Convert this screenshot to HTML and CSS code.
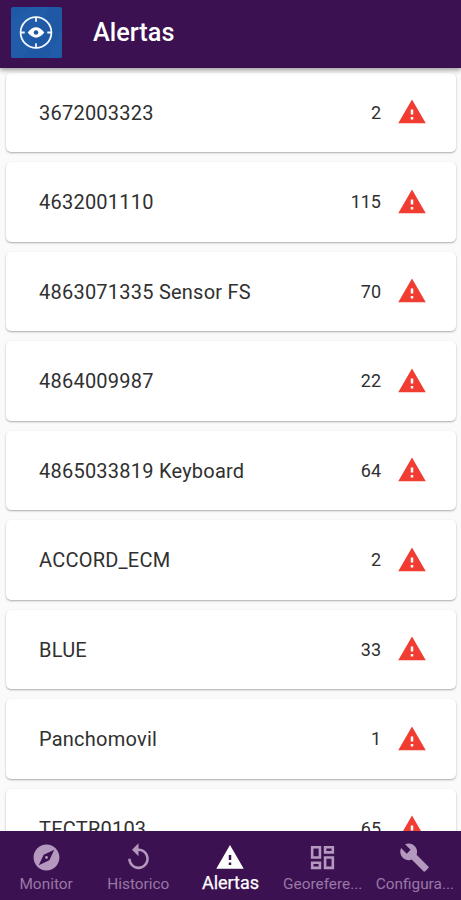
FILE: index.html
```html
<!DOCTYPE html>
<html lang="es">
<head>
<meta charset="utf-8">
<title>Alertas</title>
<link rel="stylesheet" href="styles.css">
</head>
<body>
<svg class="defs" width="0" height="0">
  <symbol id="warning" viewBox="0 0 24 24"><path d="M1 21h22L12 2 1 21zm12-3h-2v-2h2v2zm0-4h-2v-4h2v4z"/></symbol>
</svg>
<div class="app">
  <header class="bar">
    <svg class="logo" viewBox="0 0 52 52">
      <rect width="52" height="52" rx="2" fill="#1f58a5"/>
      <path d="M0 12 20 0h20L12 52H0zM52 20 38 52h14z" fill="#2867b1" opacity=".3"/>
      <g fill="none" stroke="#f4f8ff" stroke-width="1.8">
        <circle cx="25.5" cy="26" r="15.7"/>
        <path d="M25.5 10v5M25.5 37v5M9.500 26h4.500M37 26h4.500"/>
      </g>
      <path d="M17 26q8.500-10.500 17 0q-8.500 10.500-17 0z" fill="#fff"/>
      <circle cx="25.500" cy="26" r="2.300" fill="#1f58a5"/>
    </svg>
    <h1 class="title">Alertas</h1>
  </header>
  <main class="list">
    <div class="card"><span class="name">3672003323</span><span class="count">2</span><svg class="alert"><use href="#warning"/></svg></div>
    <div class="card"><span class="name">4632001110</span><span class="count">115</span><svg class="alert"><use href="#warning"/></svg></div>
    <div class="card"><span class="name">4863071335 Sensor FS</span><span class="count">70</span><svg class="alert"><use href="#warning"/></svg></div>
    <div class="card"><span class="name">4864009987</span><span class="count">22</span><svg class="alert"><use href="#warning"/></svg></div>
    <div class="card"><span class="name">4865033819 Keyboard</span><span class="count">64</span><svg class="alert"><use href="#warning"/></svg></div>
    <div class="card"><span class="name">ACCORD_ECM</span><span class="count">2</span><svg class="alert"><use href="#warning"/></svg></div>
    <div class="card"><span class="name">BLUE</span><span class="count">33</span><svg class="alert"><use href="#warning"/></svg></div>
    <div class="card"><span class="name">Panchomovil</span><span class="count">1</span><svg class="alert"><use href="#warning"/></svg></div>
    <div class="card"><span class="name">TECTR0103</span><span class="count">65</span><svg class="alert"><use href="#warning"/></svg></div>
  </main>
  <nav class="nav">
    <a class="tab"><svg class="icon" viewBox="0 0 24 24"><path d="M12 10.900c-.61 0-1.100.49-1.100 1.100s.49 1.100 1.100 1.100 1.100-.49 1.100-1.100-.49-1.100-1.100-1.100zM12 2C6.480 2 2 6.480 2 12s4.480 10 10 10 10-4.480 10-10S17.520 2 12 2zm2.190 12.190L6 18l3.810-8.190L18 6l-3.810 8.190z"/></svg><span class="label">Monitor</span></a>
    <a class="tab"><svg class="icon" viewBox="0 0 24 24"><path d="M12 5V1L7 6l5 5V7c3.310 0 6 2.690 6 6s-2.690 6-6 6-6-2.690-6-6H4c0 4.420 3.580 8 8 8s8-3.580 8-8-3.580-8-8-8z"/></svg><span class="label">Historico</span></a>
    <a class="tab active"><svg class="icon"><use href="#warning"/></svg><span class="label">Alertas</span></a>
    <a class="tab"><svg class="icon" viewBox="0 0 24 24"><path d="M19 5v2h-4V5h4M9 5v6H5V5h4m10 8v6h-4v-6h4M9 17v2H5v-2h4M21 3h-8v6h8V3zM11 3H3v10h8V3zm10 8h-8v10h8V11zm-10 4H3v6h8v-6z"/></svg><span class="label">Georefere...</span></a>
    <a class="tab"><svg class="icon" viewBox="0 0 24 24"><path d="M22.700 19l-9.100-9.100c.9-2.300.4-5-1.500-6.900-2-2-5-2.400-7.400-1.300L9 6 6 9 1.600 4.700C.4 7.100.9 10.100 2.900 12.100c1.900 1.900 4.600 2.400 6.900 1.500l9.100 9.100c.4.4 1 .4 1.400 0l2.300-2.300c.5-.4.5-1.100.1-1.400z"/></svg><span class="label">Configura...</span></a>
  </nav>
</div>
</body>
</html>
```

FILE: styles.css
```css
* { box-sizing: border-box; }

body {
  margin: 0;
  background: #fafafa;
  font-family: Roboto, "Liberation Sans", sans-serif;
}

.defs { display: block; }

.app {
  display: flex;
  flex-direction: column;
  height: 900px;
  overflow: hidden;
}

.bar {
  position: relative;
  z-index: 1;
  flex: none;
  display: flex;
  align-items: center;
  gap: 31px;
  height: 68px;
  padding: 0 11px 4px;
  background: #3c1151;
  box-shadow: 0 2px 5px rgba(0, 0, 0, .4);
}

.logo { width: 51px; height: 51px; }

.title {
  margin: 2px 0 0;
  color: #fff;
  font-size: 25.3px;
  font-weight: 500;
  line-height: 32px;
}

.list {
  flex: 1;
  min-height: 0;
  display: flex;
  flex-direction: column;
  gap: 10px;
  padding: 4.5px 5px 0 5.5px;
  overflow: hidden;
}

.card {
  flex: none;
  display: flex;
  align-items: center;
  height: 79.5px;
  padding: 0 29px 0 33.5px;
  background: #fff;
  border-radius: 5px;
  box-shadow: 0 1px 2px rgba(0, 0, 0, .32);
  color: #303030;
}

.name {
  flex: 1;
  padding-top: 1px;
  font-size: 20px;
  letter-spacing: .23px;
}

.count {
  font-size: 18px;
  letter-spacing: 0;
}

.alert {
  width: 30px;
  height: 30px;
  margin-left: 16px;
  fill: #f13c32;
}

.nav {
  flex: none;
  display: grid;
  grid-template-columns: repeat(5, 1fr);
  height: 69px;
  background: #3c1151;
}

.tab {
  display: flex;
  flex-direction: column;
  align-items: center;
  padding-top: 11px;
  color: #9878a5;
}

.icon {
  width: 31px;
  height: 31px;
  fill: #b498bd;
}

.active .icon {
  width: 30px;
  fill: #fff;
}

.label {
  margin-top: 1px;
  font-size: 15.4px;
  line-height: 20px;
  letter-spacing: 0;
  white-space: nowrap;
}

.active { color: #fff; }

.active .label {
  margin-top: 0;
  font-size: 18px;
  font-weight: 400;
  -webkit-text-stroke: .25px #fff;
}
```
